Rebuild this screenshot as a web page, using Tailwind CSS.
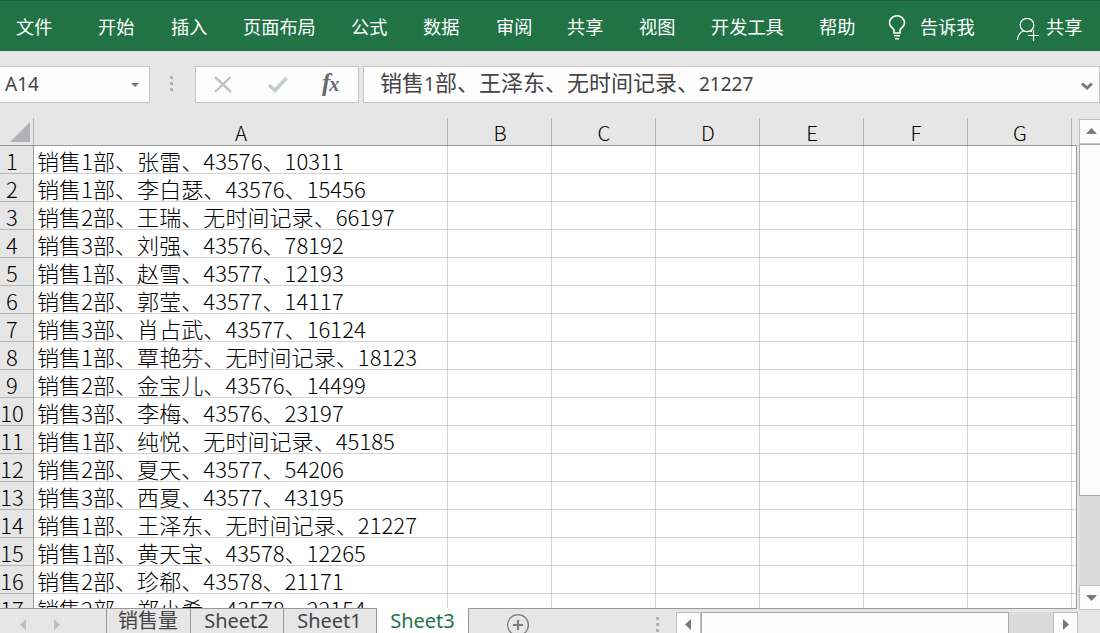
<!DOCTYPE html>
<html lang="zh-CN">
<head>
  <meta charset="UTF-8">
  <meta name="viewport" content="width=device-width, initial-scale=1.0">
  <title>Sheet3</title>
  <script src="https://cdn.jsdelivr.net/npm/@tailwindcss/browser@4"></script>
</head>
<body class="w-[1100px] h-[633px] overflow-hidden flex flex-col bg-[#e6e6e6] font-['Noto_Sans_CJK_SC',sans-serif] text-black whitespace-nowrap">

  <!-- Ribbon tabs -->
  <nav class="h-[51px] shrink-0 bg-[#217346] border-t border-[#1b5e39] text-white text-[18.2px] leading-[51px] flex pl-4">
    <a class="w-[82px]">文件</a>
    <a class="w-[73px]">开始</a>
    <a class="w-[72px]">插入</a>
    <a class="w-[108px]">页面布局</a>
    <a class="w-[72px]">公式</a>
    <a class="w-[73px]">数据</a>
    <a class="w-[71px]">审阅</a>
    <a class="w-[72px]">共享</a>
    <a class="w-[72px]">视图</a>
    <a class="w-[108px]">开发工具</a>
    <a class="w-[69px]">帮助</a>
    <a class="w-[128px] flex">
      <svg class="w-[18px] h-[26px] mt-[14px] mr-[14px]" viewBox="0 0 18 26" fill="none" stroke="#fff" stroke-width="1.6">
        <path d="M6 18v-3C4.800 12.500 1.500 11.500 1.500 8a7.500 7.200 0 0 1 15 0c0 3.500-3.300 4.500-4.500 7v3z"/>
        <path d="M6 20.700h6M7 23.800h4"/>
      </svg>
      告诉我
    </a>
    <a class="flex">
      <svg class="w-[24px] h-[26px] mt-[15px] mr-[6px]" viewBox="0 0 24 26" fill="none" stroke="#fff" stroke-width="1.200">
        <ellipse cx="11" cy="9" rx="6.800" ry="6.700"/>
        <path d="M1.500 24c.3-5 3-8 6.300-9.200M14 14.800l2 1"/>
        <path d="M12 19.500h11M17.500 14v11"/>
      </svg>
      共享
    </a>
  </nav>

  <!-- Name box and formula bar -->
  <div class="h-[67px] shrink-0 flex pt-[15px] text-[#444]">
    <div class="w-[150px] h-[37px] bg-[#fdfdfd] border border-l-0 border-[#c6c6c6] flex items-center justify-between pl-[5px] pr-[10px] font-['Noto_Sans',sans-serif] text-[19px] leading-none">
      <span>A14</span>
      <svg class="w-2 h-1" viewBox="0 0 8 4"><path d="M0 0h8L4 4z" fill="#777"/></svg>
    </div>
    <div class="w-[45px] flex flex-col gap-[3px] pt-[10px] pl-5">
      <i class="size-[3px] bg-[#b1b1b9]"></i>
      <i class="size-[3px] bg-[#b1b1b9]"></i>
      <i class="size-[3px] bg-[#b1b1b9]"></i>
    </div>
    <div class="w-[164px] h-[37px] bg-[#fdfdfd] border border-[#c6c6c6] flex pl-[18px]">
      <svg class="w-[18px] h-[17px] mt-[9px] mr-[36px]" viewBox="0 0 18 17" fill="none" stroke="#c3c3c3" stroke-width="2.400"><path d="M1 1l16 15M16.500 1L1 16"/></svg>
      <svg class="w-[20px] h-[17px] mt-[9px] mr-[34px]" viewBox="0 0 20 17" fill="none" stroke="#c3cdc8" stroke-width="3.600"><path d="M1 9l6 5.500L18.500 2"/></svg>
      <span class="font-['Liberation_Serif',serif] italic font-bold text-[#666b6b] text-[25px] leading-[32px] tracking-[-1px]">f<span class="text-[20px]">x</span></span>
    </div>
    <div class="ml-1 w-[737px] h-[37px] bg-[#fdfdfd] border border-[#c6c6c6] flex justify-between items-center pl-[16px] pr-[6px] text-[22px] leading-none">
      <span class="pb-[5px]">销售<span class="font-['Noto_Sans',sans-serif] text-[19px]">1</span>部、王泽东、无时间记录、<span class="font-['Noto_Sans',sans-serif] text-[19px]">21227</span></span>
      <svg class="w-3 h-2 mt-0.5" viewBox="0 0 12 8" fill="none" stroke="#757b7b" stroke-width="3"><path d="M1 1.500l5 4.500 5-4.500"/></svg>
    </div>
  </div>

  <div class="h-[491px] shrink-0 flex">
    <!-- Grid -->
    <div class="w-[1077px] flex flex-col">
      <div id="columns" class="h-7 shrink-0 flex border-b border-[#999] text-[20.5px] leading-[29px] font-light text-center">
        <div class="w-[34px] flex items-end justify-end pr-[3px] pb-[3px] border-r border-[#b5b5b5]">
          <svg class="w-5 h-5" viewBox="0 0 20 20"><path d="M20 0v20H0z" fill="#b1b1b9"/></svg>
        </div>
      </div>
      <div id="rows" class="h-[463px] shrink-0 overflow-hidden border-r border-b border-[#999] bg-white text-[22px] leading-[28px] font-light"></div>
    </div>

    <!-- Vertical scrollbar -->
    <div class="ml-[2px] mt-[1px] w-[21px] h-[491px] flex flex-col bg-[#dadada]">
      <div class="h-[25px] w-[26px] bg-[#fdfdfd] border border-[#c0c0c0] pl-[6px] pt-[8px]">
        <svg class="w-[11px] h-[6px]" viewBox="0 0 11 6"><path d="M5.500 0L11 6H0z" fill="#757b7b"/></svg>
      </div>
      <div class="h-[352px] w-[26px] bg-[#fdfdfd] border border-[#ababab]"></div>
      <div class="h-[25px] w-[26px] mt-auto bg-[#fdfdfd] border border-[#c0c0c0] pl-[6px] pt-[9px]">
        <svg class="w-[11px] h-[6px]" viewBox="0 0 11 6"><path d="M0 0h11L5.500 6z" fill="#757b7b"/></svg>
      </div>
    </div>
  </div>

  <!-- Sheet tabs -->
  <div class="h-6 shrink-0 flex text-[#444] font-['Noto_Sans','Noto_Sans_CJK_SC',sans-serif] text-[20px] leading-[24px] text-center">
    <div class="w-[106px] flex gap-[28px] pl-5 pt-[10px]">
      <svg class="w-[6px] h-[11px]" viewBox="0 0 6 11"><path d="M6 0v11L0 5.500z" fill="#bfbfbf"/></svg>
      <svg class="w-[6px] h-[11px]" viewBox="0 0 6 11"><path d="M0 0v11l6-5.500z" fill="#bfbfbf"/></svg>
    </div>
    <div class="w-[84px] pr-px border-l border-[#999]">销售量</div>
    <div class="w-[93px] pr-px border-l border-[#999]">Sheet2</div>
    <div class="w-[93px] pr-px border-l border-[#999]">Sheet1</div>
    <div class="relative w-[93px] h-[25px] -mt-px border-x border-[#999] bg-white text-[#217346] leading-[26px]">Sheet3</div>
    <svg class="w-6 h-6 ml-[37px] mt-[4px]" viewBox="0 0 24 24" fill="none" stroke="#757b7b"><circle cx="12" cy="12" r="10.400" stroke-width="1.300"/><path d="M7 12h10M12 7v10" stroke-width="2"/></svg>
    <div class="w-[146px] flex flex-col items-end pr-[17px] gap-[3px] pt-2">
      <i class="size-[3px] bg-[#b1b1b1] shrink-0"></i>
      <i class="size-[3px] bg-[#b1b1b1] shrink-0"></i>
      <i class="size-[3px] bg-[#b1b1b1] shrink-0"></i>
    </div>
    <!-- Horizontal scrollbar -->
    <div class="w-[402px] h-[26px] mt-[3px] flex bg-[#dadada]">
      <div class="w-[25px] bg-[#fdfdfd] border border-[#c0c0c0] pl-2 pt-[6px]">
        <svg class="w-[6px] h-[11px]" viewBox="0 0 6 11"><path d="M6 0v11L0 5.500z" fill="#757b7b"/></svg>
      </div>
      <div class="w-[308px] bg-[#fdfdfd] border border-[#ababab]"></div>
      <div class="w-[25px] ml-auto bg-[#fdfdfd] border border-[#c0c0c0] pl-[9px] pt-[6px]">
        <svg class="w-[6px] h-[11px]" viewBox="0 0 6 11"><path d="M0 0v11l6-5.500z" fill="#757b7b"/></svg>
      </div>
    </div>
  </div>

  <script>
    const records = [
      '销售1部、张雷、43576、10311',
      '销售1部、李白瑟、43576、15456',
      '销售2部、王瑞、无时间记录、66197',
      '销售3部、刘强、43576、78192',
      '销售1部、赵雪、43577、12193',
      '销售2部、郭莹、43577、14117',
      '销售3部、肖占武、43577、16124',
      '销售1部、覃艳芬、无时间记录、18123',
      '销售2部、金宝儿、43576、14499',
      '销售3部、李梅、43576、23197',
      '销售1部、纯悦、无时间记录、45185',
      '销售2部、夏天、43577、54206',
      '销售3部、西夏、43577、43195',
      '销售1部、王泽东、无时间记录、21227',
      '销售1部、黄天宝、43578、12265',
      '销售2部、珍郗、43578、21171',
      '销售2部、郑小希、43578、22154',
    ];
    const letters = ['A', 'B', 'C', 'D', 'E', 'F', 'G'];

    document.getElementById('columns').innerHTML += letters.map((letter) =>
      `<div class="border-r border-[#b5b5b5] pl-px ${letter === 'A' ? 'w-[414px]' : 'w-[104px]'}">${letter}</div>`
    ).join('');

    const emptyCells = '<div class="w-[104px] border-r border-b border-[#d4d4d4]"></div>'.repeat(6);

    document.getElementById('rows').innerHTML = records.map((text, i) =>
      `<div class="h-7 flex">
        <div class="w-[34px] pr-[9px] text-center bg-[#e6e6e6] border-r border-b border-r-[#999] border-b-[#b5b5b5]">${i + 1}</div>
        <div class="w-[414px] pl-[3px] tracking-[0.07px] border-r border-b border-[#d4d4d4]">${text}</div>
        ${emptyCells}
        <div class="flex-1 border-b border-[#d4d4d4]"></div>
      </div>`
    ).join('');
  </script>
</body>
</html>
